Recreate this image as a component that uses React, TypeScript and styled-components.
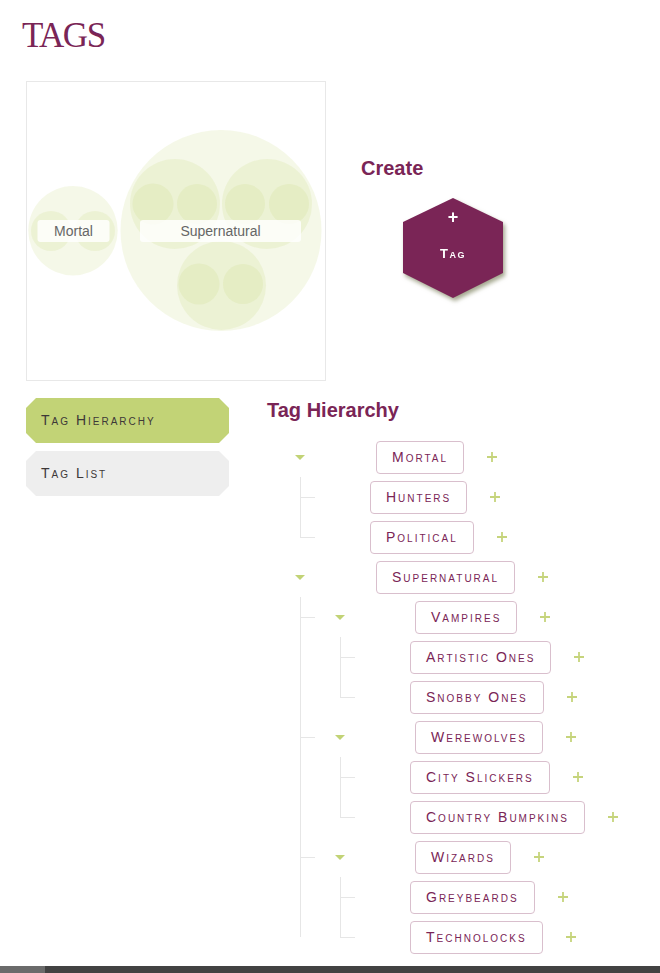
import React from "react";
import styled, { createGlobalStyle } from "styled-components";

const PURPLE = "#7a2556";
const GREEN = "#c2d376";
const LINE = "#e6e6e6";

const Global = createGlobalStyle`
  html, body { margin: 0; padding: 0; background: #fff; }
  body { font-family: "Liberation Sans", Arial, sans-serif; }
  * { box-sizing: border-box; }
`;

const Page = styled.div`
  min-height: 100vh;
  display: flex;
  flex-direction: column;
`;

const Content = styled.div`
  padding-left: 26px;
  flex: 1;
`;

const Title = styled.h1`
  margin: 16px 0 0 -4px;
  height: 40px;
  line-height: 40px;
  font-family: "Liberation Serif", "DejaVu Serif", serif;
  font-weight: normal;
  font-size: 35px;
  letter-spacing: -1.5px;
  color: ${PURPLE};
`;

const TopRow = styled.div`
  display: flex;
  margin-top: 25px;
`;

const ChartBox = styled.div`
  width: 300px;
  height: 300px;
  border: 1px solid #e8e8e8;
  flex-shrink: 0;
  svg { display: block; }
`;

const CreatePanel = styled.div`
  margin-left: 35px;
  padding-top: 75px;
  display: flex;
  flex-direction: column;
`;

const Heading = styled.h2`
  margin: 0;
  height: 24px;
  line-height: 24px;
  font-size: 20px;
  font-weight: bold;
  color: ${PURPLE};
`;

const HexWrap = styled.div`
  margin: 18px 0 0 42px;
  width: 100px;
  height: 100px;
  filter: drop-shadow(2px 3px 2px rgba(90, 95, 50, 0.55));
`;

const Hex = styled.button`
  width: 100px;
  height: 100px;
  border: none;
  padding: 0;
  background: ${PURPLE};
  clip-path: polygon(50% 0, 100% 24%, 100% 75%, 50% 100%, 0 75%, 0 24%);
  color: #fff;
  display: flex;
  flex-direction: column;
  align-items: center;
  font-family: "Liberation Sans", Arial, sans-serif;
  cursor: pointer;
`;

const HexPlus = styled.span`
  margin-top: 10px;
  font-size: 18px;
  font-weight: bold;
  line-height: 18px;
`;

const HexLabel = styled.span`
  margin-top: 20px;
  font-size: 13px;
  font-weight: bold;
  font-variant: small-caps;
  letter-spacing: 1.5px;
  line-height: 16px;
`;

const BottomRow = styled.div`
  display: flex;
  margin-top: 17px;
`;

const Nav = styled.nav`
  width: 203px;
  display: flex;
  flex-direction: column;
  gap: 8px;
  flex-shrink: 0;
`;

const NavButton = styled.div<{ $active?: boolean }>`
  height: 45px;
  line-height: 45px;
  padding-left: 15px;
  background: ${(p) => (p.$active ? GREEN : "#eeeeee")};
  clip-path: polygon(10px 0, calc(100% - 10px) 0, 100% 10px, 100% calc(100% - 10px), calc(100% - 10px) 100%, 10px 100%, 0 calc(100% - 10px), 0 10px);
  font-size: 14px;
  font-variant: small-caps;
  letter-spacing: 2px;
  color: #3d3838;
  cursor: pointer;
`;

const Hierarchy = styled.section`
  margin-left: 38px;
`;

const Tree = styled.div`
  margin: 15px 0 0 13px;
  display: flex;
  flex-direction: column;
`;

const Row = styled.div`
  height: 40px;
  display: flex;
  align-items: center;
`;

type CellKind = "toggle" | "pipe" | "tee" | "elbow" | "half";

const cellBg: Record<CellKind, { img: string; size: string; pos: string }> = {
  toggle: { img: "none", size: "auto", pos: "0 0" },
  pipe: { img: `linear-gradient(${LINE}, ${LINE})`, size: "1px 40px", pos: "20px 0" },
  tee: {
    img: `linear-gradient(${LINE}, ${LINE}), linear-gradient(${LINE}, ${LINE})`,
    size: "1px 40px, 15px 1px",
    pos: "20px 0, 20px 20px",
  },
  elbow: {
    img: `linear-gradient(${LINE}, ${LINE}), linear-gradient(${LINE}, ${LINE})`,
    size: "1px 20px, 15px 1px",
    pos: "20px 0, 20px 20px",
  },
  half: { img: `linear-gradient(${LINE}, ${LINE})`, size: "1px 20px", pos: "20px 0" },
};

const Cell = styled.div<{ $kind: CellKind }>`
  width: 40px;
  height: 40px;
  flex-shrink: 0;
  display: flex;
  align-items: center;
  justify-content: center;
  background-repeat: no-repeat;
  background-image: ${(p) => cellBg[p.$kind].img};
  background-size: ${(p) => cellBg[p.$kind].size};
  background-position: ${(p) => cellBg[p.$kind].pos};
`;

const Caret = styled.span`
  width: 0;
  height: 0;
  border-left: 5px solid transparent;
  border-right: 5px solid transparent;
  border-top: 5px solid ${GREEN};
`;

const TagBox = styled.div<{ $offset: number }>`
  margin-left: ${(p) => p.$offset}px;
  height: 33px;
  line-height: 31px;
  padding: 0 15px;
  border: 1px solid #d9bfcd;
  border-radius: 4px;
  font-size: 14px;
  font-variant: small-caps;
  letter-spacing: 2px;
  color: ${PURPLE};
  white-space: nowrap;
  background: #fff;
`;

const AddButton = styled.span`
  margin-left: 23px;
  width: 10px;
  height: 10px;
  display: flex;
  svg { display: block; }
`;

const Footer = styled.div`
  height: 7px;
  background: #424242;
  display: flex;
  margin-top: 9px;
`;

const FooterThumb = styled.div`
  width: 45px;
  background: #6b6b6b;
`;

type Node = { label: string; cells: CellKind[]; offset: number };

const rows: Node[] = [
  { label: "Mortal", cells: ["toggle"], offset: 56 },
  { label: "Hunters", cells: ["tee"], offset: 50 },
  { label: "Political", cells: ["elbow"], offset: 50 },
  { label: "Supernatural", cells: ["toggle"], offset: 56 },
  { label: "Vampires", cells: ["tee", "toggle"], offset: 55 },
  { label: "Artistic Ones", cells: ["pipe", "tee"], offset: 50 },
  { label: "Snobby Ones", cells: ["pipe", "elbow"], offset: 50 },
  { label: "Werewolves", cells: ["tee", "toggle"], offset: 55 },
  { label: "City Slickers", cells: ["pipe", "tee"], offset: 50 },
  { label: "Country Bumpkins", cells: ["pipe", "elbow"], offset: 50 },
  { label: "Wizards", cells: ["tee", "toggle"], offset: 55 },
  { label: "Greybeards", cells: ["pipe", "tee"], offset: 50 },
  { label: "Technolocks", cells: ["half", "elbow"], offset: 50 },
];

const Plus = () => (
  <AddButton>
    <svg width="10" height="10" viewBox="0 0 10 10">
      <path d="M5 0v10M0 5h10" stroke="#c6d47c" strokeWidth="1.8" />
    </svg>
  </AddButton>
);

const L1 = "rgba(192,210,115,0.16)";

const BubbleChart = () => (
  <svg width="298" height="298" viewBox="0 0 298 298">
    <g fill={L1}>
      <circle cx="46" cy="148.7" r="44.7" />
      <circle cx="24" cy="149" r="20" />
      <circle cx="68" cy="149" r="20" />
      <circle cx="194" cy="148.5" r="100.5" />
      <circle cx="148" cy="122" r="45" />
      <circle cx="240" cy="122" r="45" />
      <circle cx="194.5" cy="203.5" r="44.5" />
      <circle cx="126" cy="122" r="20.5" />
      <circle cx="170" cy="122" r="20" />
      <circle cx="218" cy="122" r="20" />
      <circle cx="262" cy="122" r="20" />
      <circle cx="172" cy="202" r="20.5" />
      <circle cx="216" cy="202" r="20" />
    </g>
    <g fontFamily="'Liberation Sans', Arial, sans-serif" fontSize="14" fill="#666" textAnchor="middle">
      <rect x="10.5" y="138" width="72" height="22" rx="3" fill="rgba(255,255,255,0.82)" />
      <text x="46.5" y="154">Mortal</text>
      <rect x="113" y="138" width="161" height="22" rx="3" fill="rgba(255,255,255,0.82)" />
      <text x="193.5" y="154">Supernatural</text>
    </g>
  </svg>
);

export default function App() {
  return (
    <Page>
      <Global />
      <Content>
        <Title>TAGS</Title>
        <TopRow>
          <ChartBox>
            <BubbleChart />
          </ChartBox>
          <CreatePanel>
            <Heading>Create</Heading>
            <HexWrap>
              <Hex>
                <HexPlus>+</HexPlus>
                <HexLabel>Tag</HexLabel>
              </Hex>
            </HexWrap>
          </CreatePanel>
        </TopRow>
        <BottomRow>
          <Nav>
            <NavButton $active>Tag Hierarchy</NavButton>
            <NavButton>Tag List</NavButton>
          </Nav>
          <Hierarchy>
            <Heading>Tag Hierarchy</Heading>
            <Tree>
              {rows.map((r) => (
                <Row key={r.label}>
                  {r.cells.map((c, i) => (
                    <Cell key={i} $kind={c}>
                      {c === "toggle" && <Caret />}
                    </Cell>
                  ))}
                  <TagBox $offset={r.offset}>{r.label}</TagBox>
                  <Plus />
                </Row>
              ))}
            </Tree>
          </Hierarchy>
        </BottomRow>
      </Content>
      <Footer>
        <FooterThumb />
      </Footer>
    </Page>
  );
}
